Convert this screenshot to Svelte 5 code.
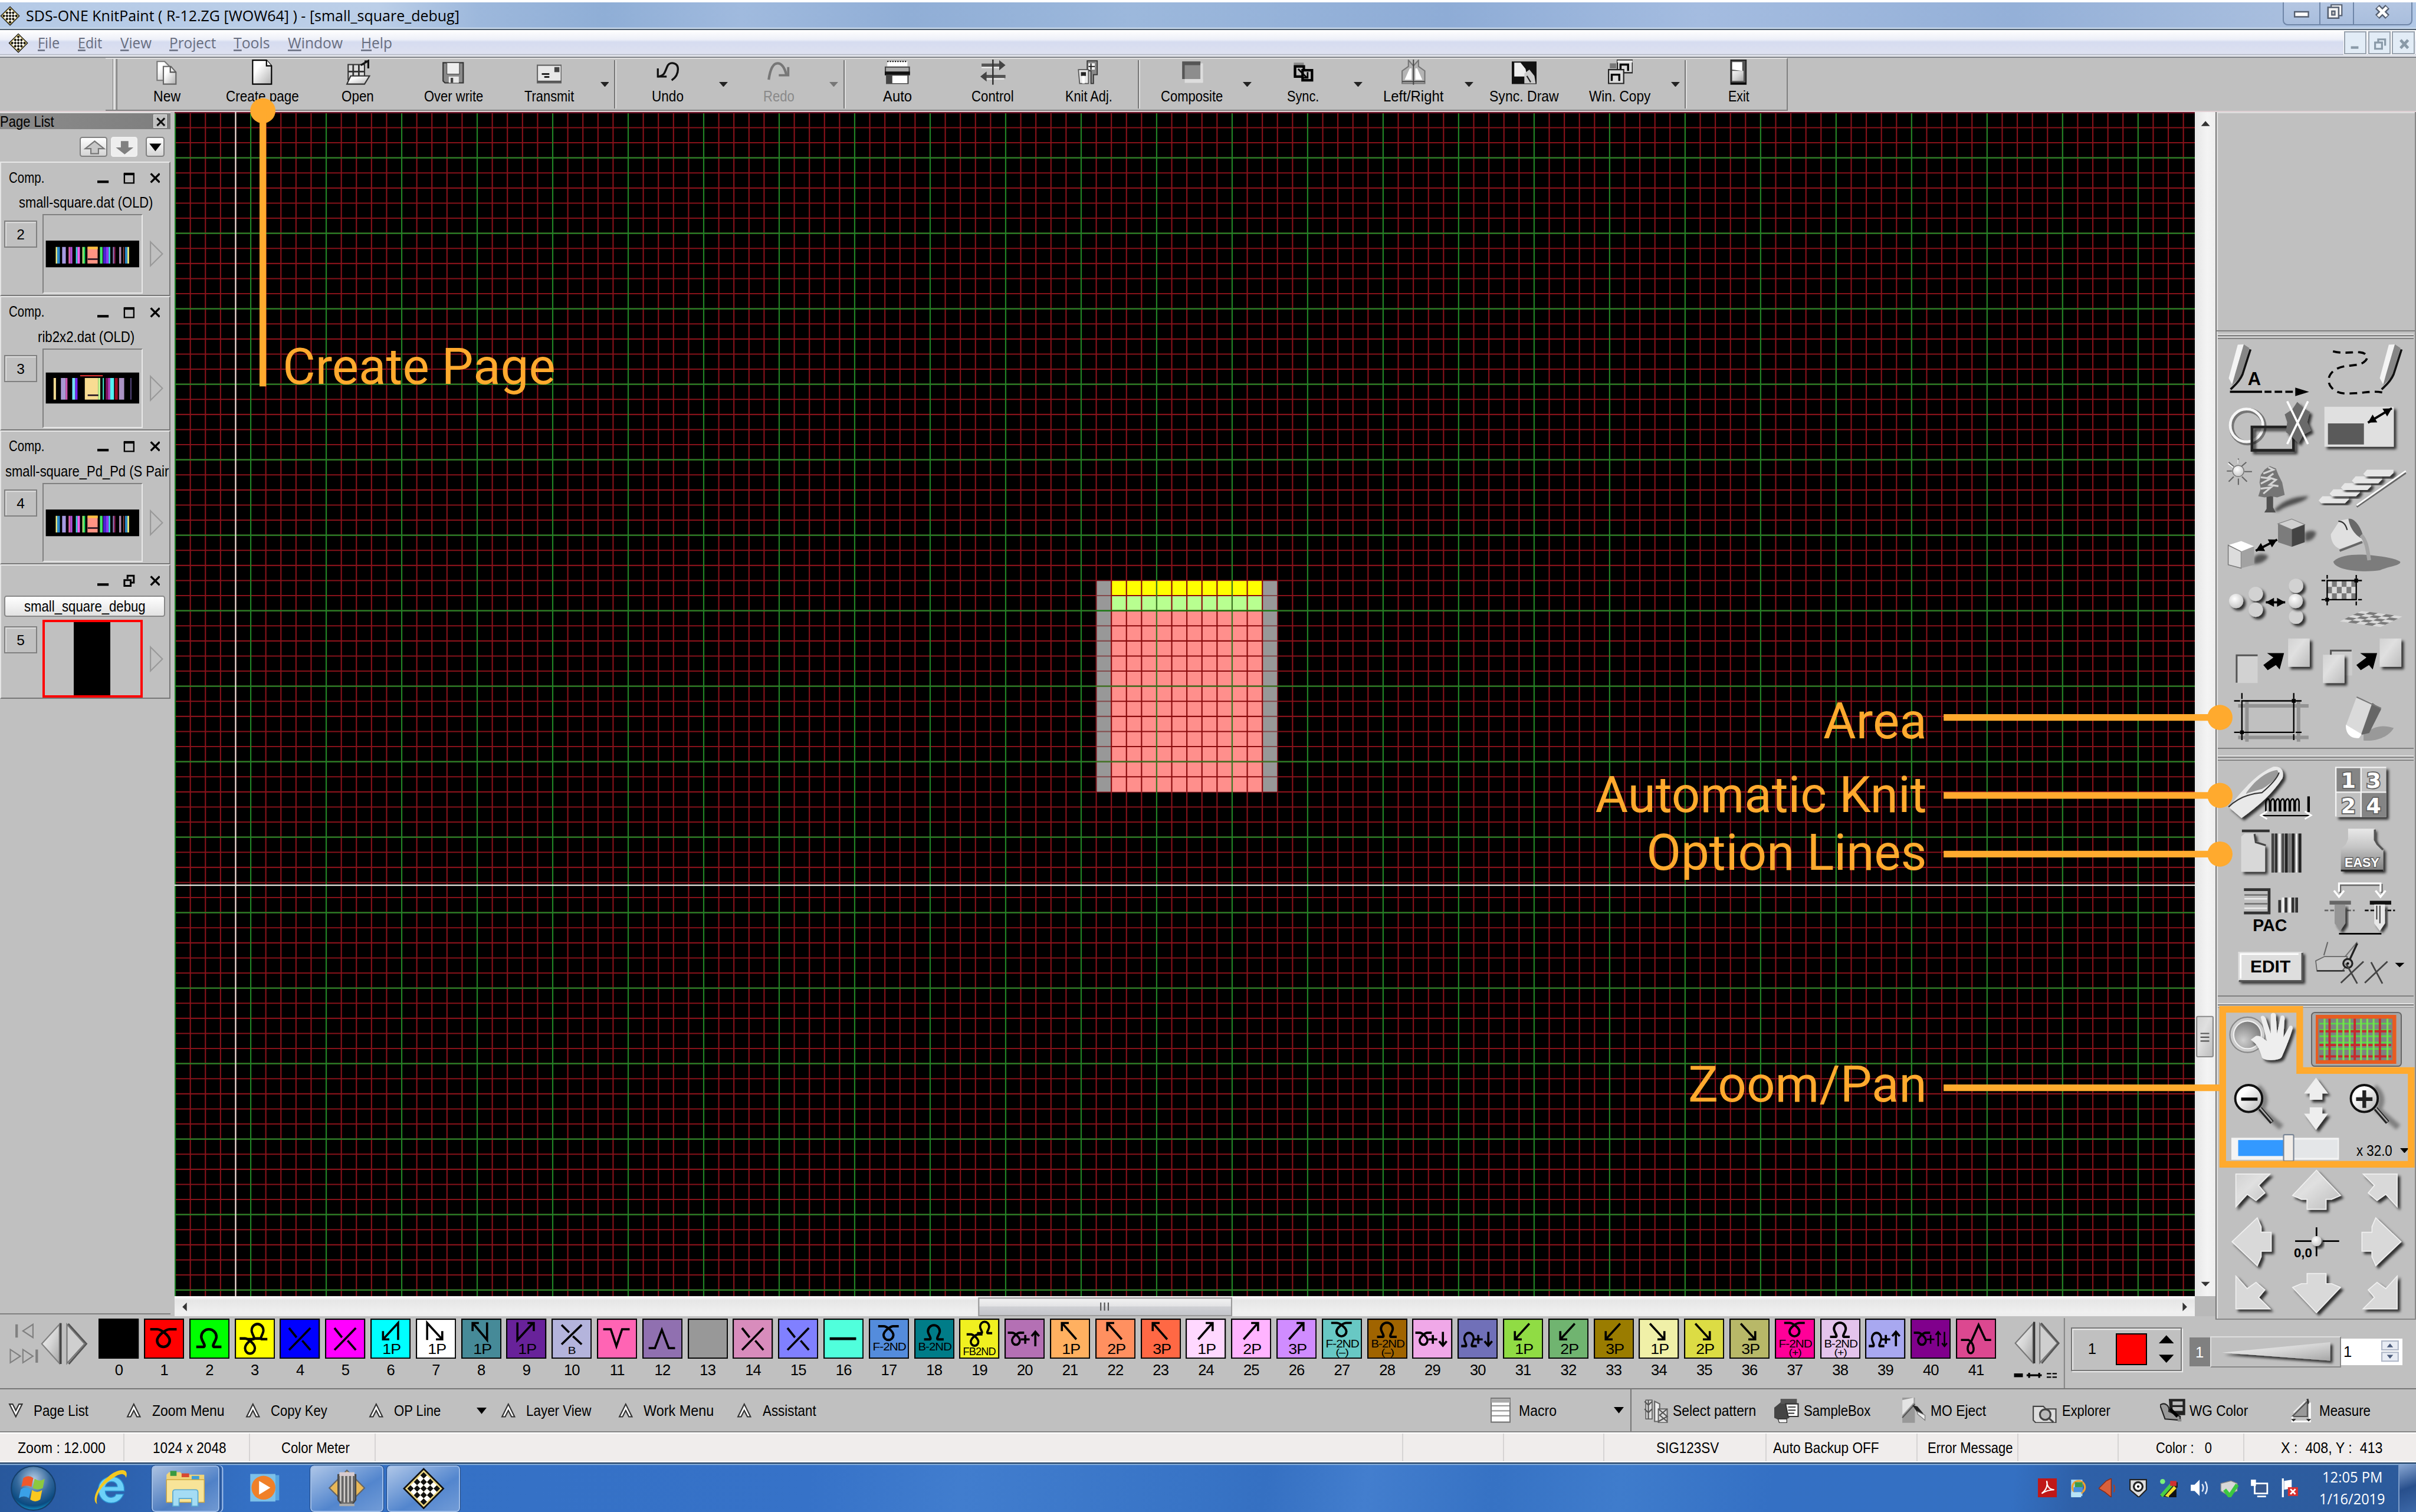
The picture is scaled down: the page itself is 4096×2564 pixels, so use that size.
<script>
  // ---------- drawing helpers ----------
  const range = (a, b, s) => {
    const r = [];
    for (let v = a; v <= b; v += s) r.push(v);
    return r;
  };
  const LEFT = 138.6, RIGHT = 1744.4, TOP = 89, BOTTOM = 1030.3;
  const vPath = (xs) => xs.map((x) => `M${x} ${TOP}V${BOTTOM}`).join('');
  const hPath = (ys) => ys.map((y) => `M${LEFT} ${y}H${RIGHT}`).join('');
  const redV = vPath(range(151.1, RIGHT, 12));
  const redH = hPath(range(101.4, BOTTOM, 12));
  const greenV = vPath(range(139.1, RIGHT, 60));
  const greenH = hPath(range(125.4, BOTTOM, 60));
  const kRedV = range(883.1, 1010, 12).map((x) => `M${x} 461.4V629.4`).join('');
  const kRedH = range(473.4, 625, 12).map((y) => `M883.1 ${y}H1003.1`).join('');
  const kGrayH = range(473.4, 625, 12).map((y) => `M871.1 ${y}H883.1M1003.1 ${y}H1015.1`).join('');

  // ---------- top toolbar ----------
  const page = 'fill="url(#paper)" stroke-width="1"';
  const toolbar = [
    { n: 'New', w: 21.6, i: `<path d="M2.500 1.500h6l4 4v11h-10z" ${page} stroke="#777"/><path d="M7.500 5.500h6l4 4.500v9.500h-10z" ${page} stroke="#666"/><path d="M13 5.500v4.500h4.500" fill="none" stroke="#555"/>` },
    { n: 'Create page', w: 58, i: `<path d="M2.500 .5h11l4 4.500v14.500h-15z" ${page} stroke="#000"/><path d="M13.500 .5v4.500h4" fill="#fff" stroke="#000"/>` },
    { n: 'Open', w: 25.7, i: `<path d="M2 4h13v12H2z" fill="#ddd" stroke="#333"/><path d="M6 4v12M10.500 4v12M2 9.500h13" stroke="#333" stroke-width="1.300"/><path d="M1 19.500l3-6.500h15l-4 6.500z" ${page} stroke="#333"/><path d="M12 4.500l6-3.500v6M15 1.500h3.500" fill="none" stroke="#111" stroke-width="1.500"/>` },
    { n: 'Over write', w: 47, i: `<path d="M1.500 2.500h16v16H3l-1.500-1.500z" fill="#8a8a8a" stroke="#333"/><path d="M4.500 2.500h10v9h-10z" fill="#eee" stroke="#555" stroke-width=".6"/><path d="M6 13.500h8v5H6z" fill="#e8e8e8"/><path d="M7.500 14.500h2v4h-2z" fill="#444"/>` },
    { n: 'Transmit', w: 39.5, drop: 1, i: `<path d="M.5 4.500h19v14H.5z" fill="#e8e8e8" stroke="#666"/><path d="M.5 17.500h19" stroke="#555" stroke-width="1.500"/><path d="M14 6h4v4h-4z" fill="#444"/><path d="M4 11.500h6M6 13.800h4" stroke="#000" stroke-width="1.200"/>` },
    { sep: 1 },
    { n: 'Undo', w: 25.3, drop: 1, i: `<path d="M2 13.500c6-1 5-3 8-9 2-3 8-2 8 3 0 4-2 7-5 9" fill="none" stroke="#111" stroke-width="1.600"/><path d="M2 7v6.500h7" fill="none" stroke="#111" stroke-width="1.500"/>` },
    { n: 'Redo', w: 24.8, off: 1, drop: 2, i: `<path d="M2 16C3 9 5 3 9 3s6 5 7 9" fill="none" stroke="#777" stroke-width="2"/><path d="M10 12.500h7.500V6" fill="none" stroke="#777" stroke-width="1.800"/>` },
    { sep: 1 },
    { n: 'Auto', w: 23, i: `<path d="M2 1.500h16v4H2z" fill="#fff"/><path d="M2 1.500h16" stroke="#000" stroke-dasharray="1 1"/><path d="M.5 6h19v5H.5z" fill="#aaa" stroke="#444"/><path d="M0 9.500h20v3H0z" fill="#111"/><path d="M1 12h18v7.500H1z" fill="#444"/><path d="M6 12.800h12v6H6z" fill="#fff"/>` },
    { n: 'Control', w: 33.6, i: `<path d="M1 4.500h15M4 13.500h16" stroke="#555" stroke-width="2.600"/><path d="M15 .5l5 4-5 4zM5 9.500l-5 4 5 4z" fill="#444"/><path d="M1 6.300h14M5 15.300h14" stroke="#eee"/><path d="M10 0v20" stroke="#333" stroke-width="1.200"/>` },
    { n: 'Knit Adj.', w: 37.4, i: `<path d="M9 1h8v11h-3v7h-2V9H9z" fill="#888" stroke="#333" stroke-width=".8"/><path d="M10 3h5v5h-5z" fill="#fff"/><path d="M12 3v5M10 5.500h5" stroke="#222"/><path d="M2 8h8v11H3z" fill="#e8e8e8" stroke="#555" stroke-width=".8"/><path d="M4 10h4v3H4z" fill="#222"/><path d="M6 13v6" stroke="#fff" stroke-width="2"/>` },
    { sep: 1 },
    { n: 'Composite', w: 49.4, drop: 1, i: `<path d="M2 1.500h14.500v14H2z" fill="#8d8d8d"/><path d="M2 1.500h14.500v3H4v11H2z" fill="#555"/><path d="M4 15.500h14.500v3H4z" fill="#ddd"/><path d="M16.500 3h2v15h-2z" fill="#ddd"/>` },
    { n: 'Sync.', w: 25.5, drop: 1, i: `<path d="M3 2.500h8v3H5v8H3z" fill="#888"/><path d="M4 5.500h7v8H4z" fill="none" stroke="#000" stroke-width="2"/><path d="M10 8.500h7.500v8H10z" fill="#c0c0c0" stroke="#000" stroke-width="2"/><path d="M6.500 7.500l7 7M14 10v4.500H9.500" stroke="#000" fill="none" stroke-width="1.300"/>` },
    { n: 'Left/Right', w: 48, drop: 1, i: `<path d="M6 .5L10 5l4-4.500v5l5 3.500v10H1V9l5-3.500z" fill="#b4b4b4" stroke="#777"/><path d="M3 16l4-9h1.500v9zM17 16l-4-9h-1.500v9z" fill="#fff"/><path d="M10 0v20M1 17.500h18" stroke="#444" stroke-width=".9"/>` },
    { n: 'Sync. Draw', w: 55.2, i: `<path d="M0 1.500h20v18H0z" fill="#111"/><path d="M2 2.500h5l4 5 1 6H2z" fill="#eee"/><path d="M10 11l4-3 4 5 1 6h-9z" fill="#ccc"/><path d="M12 13l3 5" stroke="#222"/>` },
    { n: 'Win. Copy', w: 48.9, drop: 1, i: `<path d="M8 .5h12v10H8z" fill="#ddd" stroke="#222"/><path d="M8 1.500h12" stroke="#eee" stroke-width="1.600"/><path d="M10.500 9V4h6v5" fill="none" stroke="#000" stroke-width="1.600"/><path d="M1 8h12v11H1z" fill="#ddd" stroke="#222"/><path d="M3.500 17v-5h6v5" fill="none" stroke="#000" stroke-width="1.600"/><path d="M2 3h5v4H2z" fill="#777"/>` },
    { sep: 1 },
    { n: 'Exit', w: 16.8, i: `<path d="M4 .5h12v19H4z" fill="#555" stroke="#222"/><path d="M5 2h8v7l-8-1z" fill="#fff"/><path d="M5 9h9v8H5z" fill="url(#knob)"/><path d="M4 19h12" stroke="#000" stroke-width="1.500"/>` }
  ];

  const menus = [['File', 17.4, 14.7], ['Edit', 19.3, 14.3], ['View', 24.8, 14.2], ['Project', 37.2, 13.8], ['Tools', 28.9, 14.3], ['Window', 43.6, 14.3], ['Help', 24.8, 0]];

  // ---------- page list ----------
  const narrow = { y: 20.2, h: 21.2, sy: 5, sh: 13.2, bars: [[7.9,1.2,'#f0ee80'],[9,2.2,'#2a88c8'],[13,2.9,'#a79ae2'],[18.100,1.500,'#d460b0'],[19.6,1.500,'#b050d8'],[23.900,1.300,'#40cfe0'],[25.200,1.900,'#f262f2'],[29,1.200,'#a8dc70'],[30.200,1.100,'#20e060'],[33.100,8.100,'#ff9484'],[43,2.100,'#42e468'],[45.600,2.400,'#4c22d0'],[48,2.100,'#8a38f4'],[50,1.200,'#40e0e0'],[53.300,.9,'#9282c4'],[54.300,.9,'#a22462'],[58.300,1.600,'#aa84b2'],[61.700,.5,'#d06060'],[63,1.900,'#2a88c8'],[64.900,1.300,'#f0ee80']] };
  const wide = { y: 18.200, h: 24.600, sy: 4.300, sh: 17.200, bars: [[6.200,1.900,'#f0d890'],[12,3.800,'#a898d2'],[15.800,1.400,'#d454b2'],[21,2.400,'#74e0f8'],[23.400,1.800,'#7422f2'],[31,10.600,'#f8dc92'],[41.600,1.700,'#c2fb92'],[45.200,1,'#40e0c4'],[47.600,1.900,'#801262'],[49.500,1.700,'#b442c4'],[51.200,3,'#54f0f2'],[54.900,2.300,'#9c0a22'],[58.200,4.100,'#aa92c4'],[67.200,.9,'#584a82']] };
  const pages = [
    { id: 2, name: 'small-square.dat (OLD)', w: 106.6, x: 15.2, art: narrow },
    { id: 3, name: 'rib2x2.dat (OLD)', w: 77, x: 30, art: wide },
    { id: 4, name: 'small-square_Pd_Pd (S Pair', w: 130, x: 4.2, art: narrow }
  ];

  // ---------- colour palette ----------
  const down = 'M5 8.500h5.500c3 0 10 5 10 9a5 5 0 0 1-10 0c0-4 7-9 10-9h5.500';
  const up = 'M5.500 22.500h6c2-1-2-5-2-8a6 6 0 0 1 12 0c0 3-4 7-2 8h6';
  const s = (d, t = '', w = 1.700) => `<path d="${d}" fill="none" stroke="#000" stroke-width="${w}" ${t}/>`;
  const cap = (x, y, w, txt, f = 11.500) => `<text x="${x}" y="${y}" font-size="${f}" textLength="${w}" lengthAdjust="spacingAndGlyphs">${txt}</text>`;
  const cross = s('M7.500 7.500L13.500 15M18 17.500L24.500 25M24.500 7.500L7.500 25');
  const smallDown = s(down, 'transform="translate(3.500 -.5) scale(.78 .78)"', 2.400);
  const smallUp = s(up, 'transform="translate(3.500 -1.500) scale(.78 .8)"', 2.400);
  const midDown = s(down, 'transform="translate(-.5 5.500) scale(.62 .68)"', 2.700);
  const midUp = s(up, 'transform="translate(-.5 5) scale(.62 .75)"', 2.600);
  const plus = s('M13 16.500h7M16.500 13v7');
  const arU = s('M24.500 22V11M21.500 14l3-3.500 3 3.500');
  const arD = s('M24.500 10.500V21M21.500 18l3 3.500 3-3.500');
  const ul = s('M21 16.500L10 4M9.500 10V3.500H15');
  const ur = s('M10 16.500L21 4M16 3.500h5.500V10');
  const dl = s('M21 4L10 16M9.500 10v6.500H15');
  const dr = s('M9 4L20 16M20.500 10v6.500H15');
  const p = (n) => cap(9.500, 28, 14.500, n + 'P');
  const nd = (a, z, y = 25.500) => cap(3, y, 26.500, a + '-2ND', 9) + (z ? cap(11, 29.500, 10, z, 7.500) : '');
  const nds = (a, z) => nd(a, z, 22.800);
  const swatches = [
    ['#000', ''], ['#f00', s(down, '', 2.100)], ['#0f0', s(up, '', 2.100)],
    ['#ff0', s(down, 'transform="translate(0 8.500) scale(.78 .86)"', 2.400) + s(up, 'transform="translate(6 -3) scale(.78 .86)"', 2.400)],
    ['#00f', cross], ['#f0f', cross],
    ['#0ff', s('M22 17V3.500L10.500 16M10 10v6.500h5') + p(1)], ['#fff', s('M9 17V3.500L20.500 16M21 10v6.500h-5') + p(1)],
    ['#468a98', s('M20.500 3v14L9.500 4M9 10V3.500h5') + p(1)], ['#68229a', s('M9 3v14L21 4M22 10V3.500h-5') + p(1)],
    ['#b4b4dc', s('M8 5L14 11M17 14l7 6.500M24 5L8 20.500') + cap(13, 28, 6, 'B', 8)],
    ['#ff64b4', s('M5 8.500h6L15.500 22 20 8.500h6')], ['#9070b0', s('M5 23.500h5L15.500 9 21 23.500h5')],
    ['#989898', ''], ['#d88cbc', cross], ['#8080ff', cross], ['#50ffdc', s('M5 16H26', '', 2.200)],
    ['#548cdc', smallDown + nd('F')], ['#007c88', smallUp + nd('B')],
    ['#f0f020', s(down, 'transform="translate(3 7) scale(.6 .65)"', 2.800) + s(up, 'transform="translate(11 -3) scale(.6 .65)"', 2.800) + cap(3, 29, 26, 'FB2ND', 9)],
    ['#b470b4', midDown + plus + arU],
    ['#ffb060', ul + p(1)], ['#ff9060', ul + p(2)], ['#ff6844', ul + p(3)],
    ['#ffd8ff', ur + p(1)], ['#ffb4ff', ur + p(2)], ['#d08cff', ur + p(3)],
    ['#68c8c4', s(down, 'transform="translate(3.500 -3) scale(.78 .76)"', 2.400) + nds('F', '(–)')], ['#a06400', s(up, 'transform="translate(3.500 -3.500) scale(.78 .8)"', 2.400) + nds('B', '(–)')],
    ['#f0a8e8', midDown + plus + arD], ['#7070b8', midUp + plus + arD],
    ['#90dc44', dl + p(1)], ['#70b470', dl + p(2)], ['#9a7c00', dl + p(3)],
    ['#f0f0a8', dr + p(1)], ['#dcdc44', dr + p(2)], ['#b8b868', dr + p(3)],
    ['#ff0098', s(down, 'transform="translate(3.500 -3) scale(.78 .76)"', 2.400) + nds('F', '(+)')], ['#e4c4ec', s(up, 'transform="translate(3.500 -3.500) scale(.78 .8)"', 2.400) + nds('B', '(+)')],
    ['#a8a8f0', midUp + plus + arU], ['#80008c', midDown + s('M13 16.500h6M16 13v7M22 22V10.500M20 13l2-2.500 2 2.500M27 10.500V22M25 19.500l2 2.500 2-2.500', '', 1.200)],
    ['#dc4890', s('M4 17h6c5 3 5 10 2 10.500s-4-6 0-9L18 5l5.500 12H28')]
  ];

  // ---------- right tool box ----------
  const pen = '<path d="M10.700 4.500l4.800-.3L9 27l-2.500 9.500-3-5.500z" fill="#f4f4f4"/><path d="M15.500 4.200l4.500 3L13 30l-7 7 2.500-9z" fill="#868686"/><path d="M20.800 8.200L14.500 28C12 34 8 37 5 40" fill="none" stroke="#111" stroke-width="1.700"/>';
  const arrowTip = (x, y, r) => `<path transform="translate(${x} ${y}) rotate(${r})" d="M0 0l-6.500-3.600v7.200z" fill="#000"/>`;
  const two = (x1, y1, x2, y2) => {
    const a = (Math.atan2(y2 - y1, x2 - x1) * 180) / Math.PI;
    return `<path d="M${x1} ${y1}L${x2} ${y2}" stroke="#000" stroke-width="1.800"/>${arrowTip(x2, y2, a)}${arrowTip(x1, y1, a + 180)}`;
  };
  const sh = 'filter="url(#sh)"';
  const ball = (x, y, f = 'url(#ball)') => `<circle cx="${x}" cy="${y}" r="5.700" fill="${f}" ${sh}/>`;
  const card = (x, y) => `<path d="M${x} ${y}h17.200v22.500h-17.200z" fill="url(#soft-knob)" ${sh}/>`;
  const fatArrow = (x) => `<path d="M${x} 29l8-6-5-3.500h13.500l-3.500 13-3-3.500-6.500 4z" fill="#000"/>`;
  const frame = (x1, y1, x2, y2, e) => `<path d="M${x1 - e} ${y1}h${e - 1.5}M${x2 + 1.5} ${y1}h${e - 1.5}M${x1 - e} ${y2}h${e - 1.5}M${x2 + 1.5} ${y2}h${e - 1.5}M${x1} ${y1 - e}v${e - 1.5}M${x1} ${y2 + 1.5}v${e - 1.5}M${x2} ${y1 - e}v${e - 1.5}M${x2} ${y2 + 1.5}v${e - 1.5}" stroke="#000" stroke-width="1.100" fill="none"/><path d="M${x1} ${y1}H${x2}V${y2}H${x1}z" fill="none" stroke="#000" stroke-width="1.100"/><path d="M${x1 - 1.500} ${y2 - 1.500}h3v3h-3zM${x2 - 1.500} ${y1 - 1.500}h3v3h-3z"/>`;
  const steps = [[2.300, 33], [11, 27.600], [20, 22.600], [28.700, 17.200], [37.800, 11.900]].map(([x, y]) => `<path d="M${x} ${y + 3.500}l3-3.500h21v2.500l-3 3h-19z" fill="#e6e6e6" ${sh}/>`).join('');
  const checks = (x0, y0, w, h, c, r) => {
    let o = '';
    for (let i = 0; i < c; i++) for (let j = 0; j < r; j++) o += `<path d="M${x0 + i * w} ${y0 + j * h}h${w}v${h}h-${w}z" fill="${(i + j) % 2 ? '#7a7a7a' : '#dadada'}"/>`;
    return o;
  };
  const topTools = [
    pen + '<text x="18.600" y="36.500" font-size="15" font-weight="bold" textLength="10.500" lengthAdjust="spacingAndGlyphs">A</text><path d="M4.500 41.900H30M32 41.900h5.500M40 41.900h6M48.500 41.900h6" stroke="#000" stroke-width="1.800"/><path d="M56.400 38.500l11 3.400-11 3.400z"/>',
    '<path d="M13.700 9.700C22 12 29 10 35 10.500S43 15 38 18.500 24 20 17 23.500 8 34 13 39 24 43.500 32 43s14-2 21-.5" fill="none" stroke="#000" stroke-width="1.700" stroke-dasharray="6 4"/><g transform="translate(47.400 0)">' + pen + '</g>',
    `<circle cx="18.700" cy="23.700" r="13" fill="none" stroke="#555" stroke-width="3.800" opacity=".7"/><circle cx="17.700" cy="22.700" r="13" fill="none" stroke="#f6f6f6" stroke-width="2.200"/><path d="M22 24h33v18.500H22z" fill="none" stroke="#222" stroke-width="2.200" ${sh}/><path d="M58 4l5 5 5 3-2 8 3 7-6 3-4 7-6-6-4-3 1-8-2-6 6-4z" fill="#6a6a6a" ${sh}/><path d="M50 3.500l16.500 34M66.500 3.500L50 37.500" stroke="#fff" stroke-width="1.700"/>`,
    `<path d="M6.900 7.900H62v31.700H6.900z" fill="#e0e0e0" ${sh}/><path d="M9.700 21.100h28.600v16.800H9.700z" fill="#5a5a5a"/>` + two(41.500, 20.500, 60.500, 9.100),
    `<path d="M3.500 6l4 3.500M17.500 6l-4 3.500M3.500 21.500l4-4M18 21.500l-4-4M11.200 3v4M11.200 19v5M2 13h4M16 13.500h6" stroke="#666"/><path d="M11 4v3M3 7l4 3" stroke="#fff" stroke-width=".8"/><circle cx="11.100" cy="13" r="4.500" fill="url(#ball)" stroke="#777" stroke-width=".7"/><path d="M39 45c6-8 16-12 28-12-4 6-16 6-24 12z" fill="#333" opacity=".8" filter="url(#soft)"/><path d="M33.600 31h5.200v11l2 4h-9l1.800-3z" fill="#505050"/><path d="M36 9l5 2 2 5 3 6 1 5 1 5-6 2-5-1-5 1-5-1 2-6-1-5 1-6 3-4z" fill="#757575"/><path d="M35 10l4 2-8 3M29 18l8 1-8 4M29 27l8-1-6 5M39 15l-4 3 6 2-5 4 7 1" stroke="#d4d4d4" stroke-width="1.500" fill="none"/>`,
    steps + '<path d="M32.600 41.500l39-27" stroke="#666" stroke-width="1.500"/><path d="M32.600 40.300l39-27.300" stroke="#fff" stroke-width="1.300"/>',
    '<path d="M24 35c4-3 9-2 11 0-3 5-8 6-12 6zM64 16c4-2 7-2 9 0-1 5-5 7-9 7z" fill="#555" filter="url(#soft)"/><path d="M3.100 26l10.300-3.300 10.300 4.200-10.300 4.200z" fill="#fff"/><path d="M3.100 26l10.300 5.100v13.200L3.100 41.600z" fill="#dcdcdc" stroke="#777" stroke-width=".7"/><path d="M13.400 31.100l10.300-4.200v14.700l-10.300 2.700z" fill="#a2a2a2"/><path d="M42.700 9l10.900-3.800 10.300 4.400-10.300 4z" fill="#d0d0d0" stroke="#888" stroke-width=".6"/><path d="M42.700 9l10.900 4.600v13.700l-10.900-3.600z" fill="#7c7c7c"/><path d="M53.600 13.600l10.300-4v14.100l-10.300 3.600z" fill="#444"/>' + two(25, 30.500, 42, 21.600),
    '<path d="M14 39c6-6 20-6 30-5 8 1 18 2 23 5 2 3-10 4-16 7-14 2-36 0-37-7z" fill="#7c7c7c"/><path d="M12 17.400l7-11 8-1.500L38 22.700 19 29c-5-2-7-7-7-11.600z" fill="#e0e0e0"/><path d="M19 30.500l18-7" stroke="#666" stroke-width="1.800"/><path d="M18 7c4 0 6 3 7 7" fill="none" stroke="#333"/><path d="M26 5c5-1 11 8 12 16-5-1-11-8-12-16z" fill="#686868"/><path d="M36 18c4 4 5 10 6.500 20" fill="none" stroke="#a4a4a4" stroke-width="3"/>',
    ball(25, 18.800, '#d2d2d2') + ball(9.400, 24.400) + ball(25, 31.400, '#d2d2d2') + two(33, 25.500, 48.400, 25.500) + ball(57, 12.400, '#d2d2d2') + ball(57, 37, '#d2d2d2') + ball(56.700, 24.400),
    checks(9.100, 8.200, 3.850, 5.070, 6, 3) + frame(9.100, 8.200, 32.200, 23.400, 4.500) + `<g transform="translate(44 38.700) scale(1.050 .27) rotate(28) translate(-17.500 -17.500)">${checks(0, 0, 7, 7, 5, 5)}</g>`,
    '<path d="M9.300 20.700h17.200v22.500H9.300z" fill="#d2d2d2"/><path d="M9.800 43V21.200h16.700" fill="none" stroke="#555" stroke-width="1.400"/>' + fatArrow(31) + card(50.700, 7.900),
    '<path d="M12 17.300h17v20H12z" fill="#ccc"/><path d="M12 24v-6.500h16.500" fill="none" stroke="#555" stroke-width="1.400"/>' + card(5.700, 20.700) + fatArrow(32.300) + card(50.800, 7.900),
    '<path d="M18 11v33M59 11v33M11 15.500h56M11 40.500h56" stroke="#888" stroke-width="2.800" opacity=".8"/>' + frame(14, 11.500, 55.200, 36.500, 6.200),
    '<path d="M38 38c8-6 14-8 24-5-4 7-14 11-24 10z" fill="#999"/><path d="M32.500 8.400L45 13 36 38l-12-7z" fill="#dadada"/><path d="M45 13l7 5.200L42.500 37 36 38.500z" fill="#666"/><path d="M32.500 8.400L52 17.500" stroke="#777"/><path d="M24 30.500l12.500 7.500-2 3c-6 1-11-3-10.500-10.500z" fill="#fff"/>'
  ];
  const teeth = (x) => `<path d="M${x - 8} 18.600h17" stroke-width="3"/><path d="M${x - 12} 24.800h24" stroke-width="1.300" stroke-dasharray="3 1.500"/>`;
  const coil = range(33, 60, 3.900).map((x) => `M${x} 38v-8q2-4 3 0v8`).join('');
  const knitTools = [
    `<path d="M3.400 34.400C12 25 22 10 38.800 2.500c6-1 9 3 7.500 9C38 24 28 33 13.700 43.300z" fill="#e9e9e9" ${sh}/><path d="M17 24C24 13 34 6 42 5c3 3-3 10-12 15z" fill="#9a9a9a"/><path d="M3.400 34.400C10 28 18 24 30 23c7-6 12-11 13.500-16" fill="none" stroke="#333" stroke-width="1"/><path d="${coil}" fill="none" stroke="#000" stroke-width="1.200"/><path d="M67 26v12.500" stroke="#000" stroke-width="2"/><path d="M30 41.300h38" stroke="#000"/><path d="M34 38l-5 3 5 3M64 38l5 3-5 3" fill="none" stroke="#fff" stroke-width="1.300"/>`,
    `<path d="M16 2.700h40v39.700H16z" fill="#c0c0c0" ${sh}/><path d="M16 2.700h20v20H16zM36 22.700h20v19.700H36z" fill="#858585"/><path d="M36 2.700v39.700M16 22.700h40M16 42V3h40" stroke="#f4f4f4" fill="none" stroke-width="1.100"/><g fill="#fff" stroke="#666" stroke-width="1.800" paint-order="stroke" font-size="17" font-weight="bold" font-family="DejaVu Sans" text-anchor="middle"><text x="26" y="19">1</text><text x="46" y="19">3</text><text x="26" y="39.500">2</text><text x="46" y="39.500">4</text></g>`,
    `<path d="M14 7.500h22" stroke="#333" stroke-width="2.200"/><path d="M13.400 12l3-2.500h7.500l1 6 7.500 3.500v21H13.400z" fill="#d8d8d8" ${sh}/><path d="M24 10l1 6.500 8 2.500" fill="none" stroke="#444" stroke-width="1.500"/><path d="M37.500 9.600h24v31h-24z" fill="#888"/>` + ['#444', '#222', '#eee', '#444', '#222', '#777', '#222', '#eee', '#222'].map((c, i) => `<path d="M${38.500 + i * 2.700} 9.600v31" stroke="${c}" stroke-width="${i % 2 ? 1.500 : 2.100}"/>`).join(''),
    `<path d="M25.700 5.800h21.100v8l2 4 4.900 4.500v16.700H20V22l4-4 1.700-4z" fill="url(#shirt)" ${sh}/><path d="M20 39h33.500" stroke="#222" stroke-width="1.400"/><path d="M47 6.500v8l2 3.500 4.500 4.500" fill="none" stroke="#555" stroke-width="1.600"/><text x="23" y="36" font-size="10.500" font-weight="bold" fill="#fff" stroke="#666" stroke-width="1.400" paint-order="stroke" textLength="27.500" lengthAdjust="spacingAndGlyphs">EASY</text>`,
    `<path d="M15.600 8.300h20v18.500h-20" fill="none" stroke="#333" stroke-width="2.200"/><path d="M16 12.500h18.500M16 19.500h18.500" stroke="#666"/><path d="M16 15.500h18M16 23h18" stroke="#eee"/><path d="M44 26.500v-10M49 26.500v-12M54.500 26.500v-12M57.500 26.500v-12" stroke="#333" stroke-width="2.200"/><path d="M46.700 26.500v-12M52 26.500v-12" stroke="#eee" stroke-width="2"/><text x="22.600" y="41.200" font-size="13.600" font-weight="bold" textLength="27.300" lengthAdjust="spacingAndGlyphs">PAC</text>`,
    `<path d="M19.500 11V4.500H52.500V11" fill="none" stroke="#666" stroke-width="1.500"/><path d="M18.500 10V3.300H51.500V10" fill="none" stroke="#fff" stroke-width="1.500"/><path d="M14.500 9l4 5 4-5M47.500 9l4 5 4-5" fill="none" stroke="#fff" stroke-width="1.600"/><g stroke="#666">${teeth(19)}</g><g stroke="#111">${teeth(51)}</g><path d="M15 20h8.500v15l-4 6-4.500-6z" fill="#959595" ${sh}/><path d="M46.500 20H55v15l-4 6-4.500-6z" fill="#e8e8e8" ${sh}/><path d="M51 21v14M48.500 21v11" stroke="#444"/><path d="M18.500 43.300h33.700" stroke="#000" stroke-width="1.200"/>`,
    `<path d="M11 11.700h51.200v23.500H11z" fill="#dedede" ${sh}/><path d="M62 12.500v22.500H11.500" fill="none" stroke="#555" stroke-width="1.600"/><path d="M13 33V13.500h46" fill="none" stroke="#fff" stroke-width="1.300"/><text x="20.600" y="28.300" font-size="13.800" font-weight="bold" textLength="32" lengthAdjust="spacingAndGlyphs">EDIT</text>`,
    `<path d="M0 19l7-3h16l10-12" stroke="#777" fill="none"/><path d="M9.500 4L6.500 14.500" stroke="#666"/><path d="M0 19l7-3.500h18l-2 9-2 2.500H1z" fill="#c8c8c8" stroke="#666" stroke-width=".8"/><path d="M1 26.800h22" stroke="#333" stroke-width="1.200"/><circle cx="25.500" cy="21" r="3.600" fill="#bbb" stroke="#222" stroke-width="1.500"/><circle cx="25.500" cy="21" r="1"/><path d="M27 18l6-13" stroke="#222" stroke-width="1.600"/><path d="M20 36.500l18-17M24 21l9 16M39 36.500l18-17M44 20l9 17" stroke="#444" stroke-width="1.300"/><path d="M63 20.500h7.500l-3.800 3.500z"/>`
  ];
  const arrowUp = 'M20 1L39 21l-7 3h-4.500v8h-15v-8H8l-7-3z';
  const corner = 'M2 2h27l-9 9 5 6-7 6-7-5-9 10z';
  const pad = [
    [corner, 0, 0], [arrowUp, 0, 1], [corner, 90, 0],
    [arrowUp, -90, 1], ['', 0, 0], [arrowUp, 90, 1],
    [corner, -90, 0], [arrowUp, 180, 1], [corner, 180, 0]
  ];

  // ---------- bottom bars ----------
  const panels = [
    { up: 0, n: 'Page List', w: 43.6, x: 6.500 }, { up: 1, n: 'Zoom Menu', w: 57.5, x: 100.500 }, { up: 1, n: 'Copy Key', w: 44.9, x: 194.800 },
    { up: 1, n: 'OP Line', w: 37.2, x: 292.800 }, { up: 1, n: 'Layer View', w: 51.8, x: 397.800, drop: 1 }, { up: 1, n: 'Work Menu', w: 55.9, x: 491.300 }, { up: 1, n: 'Assistant', w: 42.5, x: 585.600 }
  ].map((q, i, a) => ({ ...q, span: i < a.length - 1 ? a[i + 1].x - q.x : 599.100 }));
  const utils = [
    { n: 'Select pattern', w: 66.2, slot: 104.200, i: '<path d="M2 2h5v15H2z" fill="#ddd" stroke="#555" stroke-width=".7"/><path d="M1 3l3 3 3-3M1 9l3 3 3-3M4 2v15" stroke="#555" fill="none"/><path d="M9 3l4 2v14h-4z" fill="#eee" stroke="#666"/><path d="M12 9h7v11h-7z" fill="#ddd" stroke="#666"/><path d="M12 9l7 6-7 4M19 9l-6 5 6 5" stroke="#555" fill="none"/>' },
    { n: 'SampleBox', w: 53.1, slot: 100.800, i: '<path d="M0 8l6-5 6 4v9l-6 3-6-3z" fill="#444"/><path d="M5 1h13v4H5z" fill="#555"/><path d="M9 5h10v10h-8z" fill="#fff" stroke="#333"/><path d="M11 7.500h6M11 10h6M11 12.500h5" stroke="#444"/><path d="M3 17h7v3H4z" fill="#eee" stroke="#333" stroke-width=".6"/>' },
    { n: 'MO Eject', w: 44.1, slot: 104.200, i: '<path d="M1 0h10v20H1z" fill="#999"/><path d="M1 2l9-2v4L1 14z" fill="#e4e4e4"/><path d="M1 16L11 5" stroke="#555"/><path d="M9 6l4 1 5 6-5-1z" fill="#222"/><path d="M13 11l6 3v4l-6-5z" fill="#eee" stroke="#777" stroke-width=".6"/>' },
    { n: 'Explorer', w: 38.300, slot: 101.500, i: '<path d="M1 7h8l2 2h8v11H3l-2-2z" fill="#ddd" stroke="#444"/><circle cx="10.500" cy="13.500" r="4.200" fill="#bbb" stroke="#444" stroke-width="1.500"/><path d="M13 16l4 3.500" stroke="#444" stroke-width="1.500"/>' },
    { n: 'WG Color', w: 46.500, slot: 103, i: '<path d="M7 1h13v13H8z" fill="#222"/><path d="M10 3h8v3h-8zM10 7.500h8v3h-8z" fill="#bbb"/><path d="M0 6c4-3 8 1 7 5l9 4v3L4 17z" fill="#999" stroke="#222"/><path d="M8 9l6 6" stroke="#000" stroke-width="2.500"/><path d="M14 18h3" stroke="#888" stroke-width="2"/>' },
    { n: 'Measure', w: 40.800, slot: 80, i: '<path d="M2 15L14 3v12z" fill="#999" stroke="#555"/><path d="M14 1l1 4" stroke="#333" stroke-width="1.500"/><path d="M3 12L12 3" stroke="#eee"/><path d="M2 15v4h14v-4M16 4v12" stroke="#fff" fill="none" stroke-width="1.500"/><path d="M1 17h4l-2 2zM17 17h-4l2 2z" fill="#222"/>' }
  ];
  const nb = '\u00a0';
  const status = [['Zoom : 12.000', 69.8, 98.8, 14], ['1024 x 2048', 58.400, 100, 22.500], ['Color Meter', 54.300, 100, 25], ['', 0, 816.400, 0], ['', 0, 80, 0], ['', 0, 80, 0], ['SIG123SV', 49.800, 128.800, 41.200], ['Auto Backup OFF', 84.200, 119.700, 4.900], ['Error Message', 67.800, 80.500, 8.200], ['', 0, 79.600, 0], [`Color :${nb}${nb} 0`, 44.500, 100, 29.400], [`X :${nb} 408, Y :${nb} 413`, 80.900, 136, 29]];

  // checkered diamond used as the application mark
  const mesh = range(0, 24, 1).map((k) => {
    const i = k % 5, j = Math.floor(k / 5);
    return `<rect x="${-6.5 + i * 2.6}" y="${-6.5 + j * 2.6}" width="2.600" height="2.600" fill="${k % 2 ? '#fff' : '#111'}"/>`;
  }).join('');
  const diamondIcon = `<g transform="translate(12 12) rotate(45)"><rect x="-7.800" y="-7.800" width="15.600" height="15.600" fill="#ecd680" stroke="#111" stroke-width=".9"/>${mesh}</g>`;
  const tray = [
    '<path d="M0 0h15v15H0z" fill="#c01818"/><path d="M3 12c4-3 5-7 4-10 0 5 3 7 6 7-4 0-7 1-10 3z" fill="none" stroke="#fff"/>',
    '<path d="M2 1h9v13H2z" fill="#a8d8f4"/><circle cx="8" cy="7" r="5" fill="none" stroke="#f0a030" stroke-width="1.500"/><path d="M5 3h6v4H5z" fill="#3a9a4a"/><path d="M4 7h7v4H4z" fill="#4a90e0"/><path d="M2 11h8v4H2z" fill="#b8e4f8"/>',
    '<path d="M0 8l6-6 4-2v15L5 11z" fill="#d8603c" stroke="#8a2c18" stroke-width=".7"/><path d="M12 5c1 2 1 4 0 6" stroke="#a84028" fill="none"/>',
    '<path d="M1 1h13v8l-6 6-7-6z" fill="#ddd" stroke="#222"/><circle cx="7.500" cy="6.500" r="3.500" fill="#fff" stroke="#222" stroke-width="1.500"/><circle cx="7.500" cy="6.500" r="1"/>',
    '<path d="M1 14L12 3h3v4L7 15z" fill="#222"/><path d="M1 13L9 4l2 2-8 9z" fill="#46d046"/><path d="M5 14l7-8 2 2-6 7z" fill="#f0e030"/><path d="M8 14l6-6v7H8z" fill="#111"/><circle cx="3" cy="2.500" r="2" fill="#7af07a"/><path d="M9 2h5v4H9z" fill="#d03030"/>',
    '<path d="M1 5h3l4-4v13l-4-4H1z" fill="#fff"/><path d="M10 4.500q2 3 0 6M12.500 2.500q3 5 0 10" stroke="#dfe8f8" fill="none" stroke-width="1.200"/>',
    '<path d="M1 4l8-2 5 2v6l-8 3-5-3z" fill="#d8d8d8" stroke="#888" stroke-width=".6"/><path d="M4 9l4 5 6-9" fill="none" stroke="#3cc840" stroke-width="3"/>',
    '<path d="M4 4h10v8H4z" fill="#38588c" stroke="#fff" stroke-width="1.300"/><path d="M1 1h4v5H1z" fill="#fff"/><path d="M6 14.500h7" stroke="#fff" stroke-width="1.500"/>',
    '<path d="M2 0v15" stroke="#fff" stroke-width="1.500"/><path d="M3 2l6-1v7l-6 1z" fill="#fff"/><path d="M6 7h8v7H6z" fill="#d83030"/><path d="M8 8.500l4 4M12 8.500l-4 4" stroke="#fff" stroke-width="1.300"/>'
  ];
  const notes = [['Area', 586.9, 570.3], ['Automatic Knit', 645.700, 632.300], ['Option Lines', 691.300, 678.900], ['Zoom/Pan', 875.700, 864.700]];
</script>

{#snippet t(str, w, cls = '')}
  <svg class="t {cls}" width={w} height="14" viewBox="0 0 {w} 14"><text x="0" y="11.300" textLength={w} lengthAdjust="spacingAndGlyphs">{str}</text></svg>
{/snippet}

<svg class="defs" width="0" height="0">
  <defs>
    <linearGradient id="paper" x1="0" y1="0" x2="1" y2="1"><stop offset=".3" stop-color="#fff" /><stop offset="1" stop-color="#b0b0b0" /></linearGradient>
    <linearGradient id="knob" x1="0" y1="0" x2="1" y2="1"><stop offset="0" stop-color="#f4f4f4" /><stop offset=".5" stop-color="#d6d6d6" /><stop offset="1" stop-color="#a6a6a6" /></linearGradient>
    <linearGradient id="soft-knob" x1="0" y1="0" x2="1" y2="1"><stop offset="0" stop-color="#d2d2d2" /><stop offset=".4" stop-color="#e0e0e0" /><stop offset="1" stop-color="#bcbcbc" /></linearGradient>
    <linearGradient id="shirt" x2="0" y2="1"><stop offset="0" stop-color="#e8e8e8" /><stop offset=".45" stop-color="#c4c4c4" /><stop offset="1" stop-color="#808080" /></linearGradient>
    <radialGradient id="ball" cx=".4" cy=".35" r=".7"><stop offset="0" stop-color="#fff" /><stop offset="1" stop-color="#c4c4c4" /></radialGradient>
    <radialGradient id="lens" cx=".35" cy=".7" r=".8"><stop offset="0" stop-color="#cfcfcf" /><stop offset="1" stop-color="#707070" /></radialGradient>
    <radialGradient id="orb" cx=".5" cy=".3" r=".75"><stop offset="0" stop-color="#b4cce4" /><stop offset=".5" stop-color="#34689c" /><stop offset=".8" stop-color="#0a4a80" /><stop offset="1" stop-color="#18b8e8" /></radialGradient>
    <filter id="sh" x="-20%" y="-20%" width="150%" height="150%"><feDropShadow dx="2" dy="2" stdDeviation="1.100" flood-color="#000" flood-opacity=".75" /></filter>
    <filter id="soft" x="-30%" y="-30%" width="160%" height="160%"><feGaussianBlur stdDeviation="1.200" /></filter>
  </defs>
</svg>

<div class="screen">
  <header class="title">
    <svg class="app-icon" width="16" height="16" viewBox="0 0 24 24">{@html diamondIcon}</svg>
    {@render t('SDS-ONE KnitPaint ( R-12.ZG [WOW64] ) - [small_square_debug]', 344.5, 'seg')}
    <div class="win-btns">
      <svg width="28" height="18"><path d="M8.500 7.500h11v4h-11z" fill="#fff" stroke="#555f70" stroke-width="1.100" /></svg>
      <svg width="27" height="18"><path d="M8.500 2h8.500v8.500H8.500z" fill="#fff" stroke="#555f70" /><path d="M6 4h8.500v8.500H6z" fill="#f4f4f4" stroke="#555f70" stroke-width="1.200" /><path d="M9 7h2.500v3H9z" fill="#bbb" stroke="#555f70" /></svg>
      <svg width="46" height="18"><path d="M18.500 3.500l8 8M26.500 3.500l-8 8" stroke="#555f70" stroke-width="4.600" /><path d="M19 4l7 7M26 4l-7 7" stroke="#fff" stroke-width="2.400" /></svg>
    </div>
  </header>

  <nav class="menu">
    <svg class="app-icon" width="16" height="16" viewBox="0 0 24 24">{@html diamondIcon}</svg>
    {#each menus as [name, w, gap]}
      <svg class="t seg item" width={w} height="14" viewBox="0 0 {w} 14"><text y="11.300" textLength={w} lengthAdjust="spacingAndGlyphs"><tspan class="key">{name[0]}</tspan>{name.slice(1)}</text></svg>
      <i class="gap" style:width="{gap}px"></i>
    {/each}
    <div class="child-btns">
      <svg width="18" height="18"><path d="M4.500 12h6" stroke="#8a9aa8" stroke-width="2" /></svg>
      <svg width="18" height="18"><path d="M4.500 8h5.500v5H4.500zM7 7.500V5.500h5.500v5" fill="none" stroke="#8a9aa8" stroke-width="1.500" /></svg>
      <svg width="18" height="18"><path d="M6 6l6 6.500M12 6l-6 6.500" stroke="#8a9aa8" stroke-width="2.200" /></svg>
    </div>
  </nav>

  <div class="toolbar">
    <div class="tools">
      {#each toolbar as b}
        {#if b.sep}
          <i class="sep"></i>
        {:else}
          <div class="tool" class:off={b.off}>
            <svg width="20" height="20" viewBox="0 0 20 20">{@html b.i}</svg>
            {@render t(b.n, b.w)}
          </div>
          {#if b.drop}<div class="drop" class:dim={b.drop === 2}><svg width="7" height="4"><path d="M0 0h7L3.500 4z" /></svg></div>{/if}
        {/if}
      {/each}
    </div>
  </div>

  <main class="body">
    <aside class="pages">
      <div class="pages-head">
        {@render t('Page List', 43)}
        <svg class="close" width="11" height="11"><path d="M2.500 2.500l6 6M8.500 2.500l-6 6" stroke="#111" stroke-width="1.400" /></svg>
      </div>
      <div class="pages-nav">
        <svg class="nb" width="22" height="16"><path d="M11 2.500l7.500 6H14v4H8v-4H3.500z" fill="#c8c8c8" stroke="#777" /></svg>
        <svg class="nb lite" width="21" height="16"><path d="M10 13l7-5.500h-4v-5H7v5H3z" fill="#808080" /></svg>
        <svg class="nb" width="15" height="16"><path d="M2 4.500h9.500L6.750 10.500z" /></svg>
      </div>
      {#each pages as pg}
        <section class="card">
          <div class="card-top">
            {@render t('Comp.', 28.3)}
            <svg width="50" height="12"><path d="M0 9.500h9" stroke="#000" stroke-width="2" /><path d="M21.500 3.500h7.500v7h-7.500z" fill="none" stroke="#000" stroke-width="1.100" /><path d="M21 3.300h8.500" stroke="#000" stroke-width="2" /><path d="M42.500 3l7 7M49.500 3l-7 7" stroke="#000" stroke-width="1.600" /></svg>
          </div>
          <div class="card-name" style:padding-left="{pg.x}px">{@render t(pg.name, pg.w)}</div>
          <div class="card-body">
            <div class="num">{pg.id}</div>
            <svg class="thumb" width="80" height="63">
              <path d="M1.700 {pg.art.y}h74.200v{pg.art.h}H1.700z" />
              {#if pg.id === 3}<path d="M29 {pg.art.y + 2.500}h18" stroke="#d03030" />{/if}
              {#each pg.art.bars as [x, w, c]}
                <rect x={x + 1.7} y={pg.art.y + pg.art.sy} width={w} height={pg.art.sh} fill={c} />
              {/each}
              {#if pg.id !== 3}<path d="M35 26h8" stroke="#ffc040" stroke-width="2" />{/if}
              <path d="M35 {pg.art.y + pg.art.sy + pg.art.sh - 3.5}h8.500" stroke="#201020" stroke-width="1.200" />
            </svg>
            <svg class="go" width="12" height="22"><path d="M1 1.500l9.500 9.500L1 20.500z" fill="none" stroke="#999" /></svg>
          </div>
        </section>
      {/each}
      <section class="card">
        <div class="card-top end">
          <svg width="50" height="12"><path d="M0 9.500h9" stroke="#000" stroke-width="2" /><path d="M21.500 6h5v4.500h-5zM24 5V2.500h5V8h-2.500" fill="none" stroke="#000" stroke-width="1.400" /><path d="M42.500 3l7 7M49.500 3l-7 7" stroke="#000" stroke-width="1.600" /></svg>
        </div>
        <div class="active-name">{@render t('small_square_debug', 96.400)}</div>
        <div class="card-body last">
          <div class="num">5</div>
          <div class="thumb sel"><i></i></div>
          <svg class="go" width="12" height="22"><path d="M1 1.500l9.500 9.500L1 20.500z" fill="none" stroke="#999" /></svg>
        </div>
      </section>
    </aside>

    <div class="work">
      <svg class="canvas" width="1606" height="941" viewBox="138.600 89 1605.900 941.300" preserveAspectRatio="none">
        <rect x="138" y="89" width="1607" height="942" fill="#000" />
        <g fill="none" stroke-width="1">
          <path d={redV + redH} stroke="#86121a" />
          <path d={greenV + greenH} stroke="#1e8426" />
        </g>
        <path d="M871.500 461.800h143.300v167.400H871.500z" fill="#989898" />
        <path d="M883.100 461.800h120v12h-120z" fill="#ff0" />
        <path d="M883.100 473.500h120v12h-120z" fill="#b8ff90" />
        <path d="M883.100 485.400h120v143.800h-120z" fill="#ff8f8c" />
        <g fill="none" stroke-width="1">
          <path d={kGrayH} stroke="#844a4c" />
          <path d={kRedV + kRedH} stroke="#8a0a0c" />
          <path d="M919.100 461.400v168M979.100 461.400v168M871.100 545.400h144M871.100 605.400h144" stroke="#3c7a24" />
          <path d="M871.100 485.400h144" stroke="#108010" />
        </g>
        <path d="M138 89.500H1745" stroke="#6a1024" />
        <path d="M187.100 89V1031M138 703.600H1745" stroke="#e8e8e0" stroke-width="1" />
      </svg>
      <div class="vscroll">
        <svg width="16" height="941" viewBox="0 0 16 941"><path d="M5 11l3.500-4L12 11zM5 930h7l-3.500 3.500z" fill="#333" /><rect x="1.500" y="719" width="13" height="32" rx="1" fill="url(#soft-knob)" stroke="#8a8a8a" /><path d="M4.500 732.500h7M4.500 735.500h7M4.500 738.500h7" stroke="#555" /></svg>
      </div>
      <div class="hscroll">
        <svg width="1606" height="16" viewBox="0 0 1606 16"><path d="M9.500 5v7L6 8.500zM1596 5v7l3.500-3.500z" fill="#333" /><rect x="639" y="1.500" width="201" height="14" fill="url(#bar)" stroke="#9a9a9a" /><path d="M736 5v6.500M739 5v6.500M742 5v6.500" stroke="#555" /><defs><linearGradient id="bar" x2="0" y2="1"><stop stop-color="#f2f2f2" /><stop offset=".45" stop-color="#e4e4e6" /><stop offset=".5" stop-color="#cfd0d4" /><stop offset="1" stop-color="#c4c5ca" /></linearGradient></defs></svg>
      </div>
      <div class="corner"></div>
    </div>

    <aside class="toolbox">
      <div class="blank"></div>
      <div class="grip"></div>
      <div class="tool-grid top">
        {#each topTools as d}<svg width="73" height="46" viewBox="0 0 73 46">{@html d}</svg>{/each}
      </div>
      <div class="grip second"></div>
      <div class="tool-grid knit">
        {#each knitTools as d}<svg width="73" height="46" viewBox="0 0 73 46">{@html d}</svg>{/each}
      </div>
      <div class="grip third"></div>
      <div class="view-row">
        <svg width="64" height="48" viewBox="0 0 64 48">
          <circle cx="17.500" cy="21" r="14" fill="#cdcdcd" stroke="#888" stroke-width="1" /><circle cx="17.500" cy="21" r="11" fill="url(#lens)" stroke="#f0f0f0" stroke-width="1" />
          <path filter="url(#sh)" d="M24 22c4-1 7 3 9 4l-5-19c1-2 3-1 4 1l4 12 0-15c1-2 3-2 4 0l1 15 3-14c2-1 3 0 3 2l-1 15 5-9c2-1 3 1 2 3-2 7-5 14-8 21-1 4-14 4-16 1-2-7-4-11-9-14z" fill="#eee" />
        </svg>
        <div class="grid-btn">
          <svg width="64" height="39" viewBox="0 0 64 39">
            <rect width="64" height="39" fill="#e85c20" /><rect x="2" y="3" width="59" height="33" fill="#7d8480" />
            <path d="M3 7h57M3 17h57M3 27h57M3 12h57M3 22h57" stroke="#58d848" stroke-width="1.300" />
            <path d="M3 13h57M3 24h57M3 33h57M11 3v33M31 3v33M51 3v33" stroke="#c8282c" stroke-width="1.800" />
            <path d="M7 3v33M17 3v33M22 3v33M27 3v33M36 3v33M41 3v33M46 3v33M57 3v33" stroke="#78e050" stroke-width="1.500" />
          </svg>
        </div>
      </div>
      <div class="zoom-row">
        <svg width="49" height="50" viewBox="0 0 49 50"><path d="M25 12q9 8 3 18l16 14" stroke="#666" stroke-width="5" fill="none" opacity=".7" filter="url(#soft)" /><circle cx="18" cy="21" r="10.700" fill="url(#paper)" stroke="#111" stroke-width="1.800" /><path d="M12 21.500h13" stroke="#000" stroke-width="2.500" /><path d="M27 29l9.500 11" stroke="#222" stroke-width="3.500" /><path d="M27 28.500l9.500 11" stroke="#aaa" stroke-width="1.200" /></svg>
        <svg width="24" height="50" viewBox="0 0 24 50"><path filter="url(#sh)" d="M11 4.500L20.500 17h-4.500v5H6v-5H1.500z" fill="#eee" /><path filter="url(#sh)" d="M11 46L20.500 33h-4.500v-5H6v5H1.500z" fill="#eee" /></svg>
        <svg width="58" height="50" viewBox="0 0 58 50"><path d="M33 12q9 8 3 18l16 14" stroke="#666" stroke-width="5" fill="none" opacity=".7" filter="url(#soft)" /><circle cx="25" cy="21" r="10.700" fill="url(#paper)" stroke="#111" stroke-width="1.800" /><path d="M18.500 21.500h13M25 14.500v14" stroke="#222" stroke-width="3" /><path d="M34 29l9.500 11" stroke="#222" stroke-width="3.500" /><path d="M34 28.500l9.500 11" stroke="#aaa" stroke-width="1.200" /></svg>
      </div>
      <div class="slider-row">
        <svg width="86" height="22" viewBox="0 0 86 22"><rect x="0" y="3" width="85.500" height="17.500" fill="#f4f4f4" /><rect x="50" y="4.500" width="34.500" height="14.500" fill="#e4e6e8" /><rect x="5.400" y="4.800" width="37" height="12.700" fill="#3399ff" /><rect x="41.500" y="0.500" width="8" height="21" rx="1" fill="#f2ede8" stroke="#7a8696" /></svg>
        {@render t('x 32.0', 28.5)}
        <svg width="7" height="4"><path d="M0 0h7L3.500 4z" /></svg>
      </div>
      <div class="pad">
        {#each pad as [d, r, c]}
          {#if d}
            <svg width="51" height="40" viewBox="0 0 51 40">
              <g filter="url(#sh)"><path transform={c ? `translate(25 20) rotate(${r}) translate(-20 -17)` : `translate(25 20) scale(${r === 90 || r === 180 ? -1 : 1} ${r === -90 || r === 180 ? -1 : 1}) translate(-15 -15)`} {d} fill={r ? '#d9d9d9' : 'url(#soft-knob)'} stroke="#f0f0f0" stroke-width=".8" /></g>
            </svg>
          {:else}
            <svg width="51" height="40" viewBox="0 0 51 40"><path d="M8 19.500h13M30 19.500h13M25 8.500V16M25 23v8.500" stroke="#000" stroke-width="1.300" /><circle cx="25" cy="19.500" r="4" fill="url(#ball)" filter="url(#sh)" /><text x="7" y="32.200" font-size="10.500" font-weight="bold" textLength="14.500" lengthAdjust="spacingAndGlyphs">0,0</text></svg>
          {/if}
        {/each}
      </div>
    </aside>
  </main>

  <div class="palette">
    <svg class="pal-nav" width="78" height="56" viewBox="0 0 78 56">
      <g fill="none" stroke="#808080"><path d="M13 6v10.500" stroke-width="2" /><path d="M26 6v10.500L18 11.200zM8 26v10.500l8-5.200zM18 26v10.500l8-5.200z" /><path d="M29 26v10.500" stroke-width="2" /></g>
      <path d="M47 6v31L33 21.500z" fill="url(#knob)" stroke="#808080" /><path d="M53 6v31l14-15.500z" fill="#cfcfcf" stroke="#777" /><path d="M54.500 37.500l14-16L54 5.500" stroke="#555" fill="none" stroke-width="1.300" /><path d="M48 5v32.500" stroke="#444" stroke-width="1.600" />
    </svg>
    <div class="swatches">
      {#each swatches as [c, d], i}
        <div class="sw">
          <svg width="32" height="32" viewBox="0 0 32 32"><rect x=".5" y=".5" width="31" height="31" fill={c} stroke="#000" />{@html d}</svg>
          <span>{i}</span>
        </div>
      {/each}
    </div>
    <svg class="pal-next" width="45" height="57" viewBox="0 0 45 57"><path d="M19 5.500v31L5 21z" fill="url(#knob)" stroke="#777" /><path d="M24.500 5.500v31L38.500 21z" fill="#cfcfcf" stroke="#777" /><path d="M26 37l13.500-16L25.500 5" stroke="#555" fill="none" stroke-width="1.300" /><path d="M20 4v33" stroke="#333" stroke-width="1.600" /><path d="M4 45h7v3H4z" /><path d="M14 46.500h12M16 44.500v4M24 44.500v4" stroke="#000" stroke-width="1.500" /><path d="M30 45.200h8M30 48h8" stroke="#000" stroke-width="1.100" stroke-dasharray="3.500 1" /><path d="M44 1v56" stroke="#888" stroke-width="1" /></svg>
    <div class="current">
      <span>1</span><i></i>
      <svg width="12" height="24"><path d="M0 7.500L6 1l6 6.500zM0 16.500h12L6 23z" /></svg>
    </div>
    <div class="pen-width">
      <span class="pw-l">1</span>
      <svg width="104" height="25" viewBox="0 0 104 25"><path filter="url(#sh)" d="M6 13L99 4v16z" fill="url(#knob)" /></svg>
      <div class="spin"><span>1</span><svg width="15" height="18"><rect x=".5" y=".5" width="13" height="7" fill="#e8ecf4" stroke="#b0b8c8" /><rect x=".5" y="9.500" width="13" height="7" fill="#e8ecf4" stroke="#b0b8c8" /><path d="M4.500 5.500l2.500-3 2.500 3zM4.500 11.500h5l-2.500 3z" fill="#4a5a7a" /></svg></div>
    </div>
  </div>

  <div class="panelbar">
    {#each panels as q}
      <div class="panel" style:width="{q.span}px">
        {#if q.drop}<svg class="pdrop" width="8" height="5"><path d="M0 0h8L4 5z" /></svg>{/if}
        <svg class:flip={!q.up} width="12" height="12"><path d="M1 11L6 1l5 10H8.500L6 6 3.500 11z" fill="#fff" stroke="#333" stroke-width="1" /></svg>
        {@render t(q.n, q.w)}
      </div>
    {/each}
    <div class="macro">
      <svg width="16" height="20" viewBox="0 0 16 20"><path d="M.5 .5h15v19H.5z" fill="#fff" stroke="#777" /><path d="M.5 2.500h15" stroke="#aaa" stroke-width="3" /><path d="M1 6.500h14M1 10.500h14M1 14.500h14" stroke="#999" /></svg>
      {@render t('Macro', 30)}
      <svg class="mdrop" width="8" height="5"><path d="M0 0h8L4 5z" /></svg>
    </div>
    {#each utils as q}
      <div class="util" style:width="{q.slot}px">
        <svg width="20" height="20" viewBox="0 0 20 20">{@html q.i}</svg>
        {@render t(q.n, q.w)}
      </div>
    {/each}
  </div>

  <div class="status">
    {#each status as [txt, w, slot, x]}
      <div class="cell" style:width="{slot}px" style:padding-left="{x}px">{#if txt}{@render t(txt, w)}{/if}</div>
    {/each}
  </div>

  <footer class="taskbar">
    <svg class="orb" width="38" height="38" viewBox="0 0 38 38"><circle cx="19" cy="19" r="17.500" fill="url(#orb)" stroke="#16406c" /><path d="M11 11q4-3 8 0l-1.500 7q-4-2-8 0z" fill="#f0582c" /><path d="M20 11.500q4 3 8 0L26.500 19q-4 2-8 0z" fill="#8cc840" /><path d="M9 20q4-3 8 0l-1.500 7q-4-3-8 0z" fill="#3aa0e8" /><path d="M18 20.500q4 3 8 0L24.500 28q-4 3-8 0z" fill="#fcc820" /></svg>
    <svg class="ie" width="32" height="32" viewBox="0 0 32 32"><path d="M26 21c-2 5-6 7-10 7-6 0-10-5-10-11S11 7 17 7s10 5 9.500 11.500H11.500c0 3 2 5 4.500 5 2 0 3.500-1 4-2.500zM11.500 15H21c0-2.500-2-4-4.500-4s-4.500 1.500-5 4z" fill="#6cd0f8" stroke="#2a90d0" stroke-width=".7" /><path d="M5 29C-1 25 8 10 18 4c8-4 12-2 10 4-1-4-5-4-10 0C9 13 3 22 5 29z" fill="#f4c820" /></svg>
    <div class="task stack"><svg width="34" height="32" viewBox="0 0 34 32"><path d="M2 5l2-2h9l2 2h17v22H2z" fill="#f0d478" /><path d="M5 2h5v4H5z" fill="#3a9a40" /><path d="M14 4h6v3h-6z" fill="#d84830" /><path d="M22 6h6v3h-6z" fill="#40a0d8" /><path d="M2 9h30v18H2z" fill="#f8e498" stroke="#d0a840" stroke-width=".7" /><path d="M7 30V19q0-2 2-2h16q2 0 2 2v11h-5v-6H12v6z" fill="#a4dcf4" stroke="#58a8d0" stroke-width=".8" /></svg></div>
    <svg class="wmp" width="28" height="28" viewBox="0 0 28 28"><path d="M5 4h20v20H5z" fill="#60b4e8" opacity=".8" /><path d="M2 3h20v22H2z" fill="#7cc0e8" /><circle cx="12.500" cy="14" r="9.500" fill="#f08028" /><path d="M9 8.500l9 5.500-9 5.500z" fill="#fff" /></svg>
    <div class="task"><svg width="32" height="34" viewBox="0 0 32 34"><path d="M16 2.500l14 14-14 14L2 16.500z" fill="#e8b858" stroke="#666" /><path d="M9 6h14v20l-3 4h-8l-3-4z" fill="#666" stroke="#444" /><path d="M11 5v22M14 4v24M17 4v24M20 5v22" stroke="#d4d0cc" stroke-width="1.200" /><path d="M10 4h12v3H10z" fill="#d8ccd0" /><path d="M10 29h12v2H10z" fill="#aaa" /></svg></div>
    <div class="task"><svg width="34" height="34" viewBox="0 0 24 24">{@html diamondIcon}</svg></div>
    <div class="tray">
      {#each tray as d}<svg width="15" height="15" viewBox="0 0 15 15">{@html d}</svg>{/each}
    </div>
    <div class="clock">
      {@render t('12:05 PM', 48, 'seg w')}
      {@render t('1/16/2019', 52.3, 'seg w')}
    </div>
    <div class="peek"></div>
  </footer>

  <svg class="notes" width="1920" height="1202" viewBox="0 0 1920 1202">
    <circle cx="208.900" cy="88" r="10" />
    <path d="M208.900 88V307.200" />
    <text x="224.600" y="305.100">Create Page</text>
    {#each notes as [label, ty, ly], i}
      <text class="end" x="1531.200" y={ty}>{label}</text>
      <path d="M1544.600 {ly}H1764" />
      {#if i < 3}<circle cx="1764.200" cy={ly} r="10" />{/if}
    {/each}
    <path d="M1766.400 802.300H1827.600V851H1916.200V925.500H1766.400z" />
  </svg>
</div>

<style>
  :global(body) { overflow: hidden; background: #c0c0c0; }
  .defs { position: absolute; }
  .screen {
    zoom: 2.13334;
    position: relative;
    width: 1920px;
    height: 1202px;
    overflow: hidden;
    display: grid;
    grid-template-rows: 24px 22px 43px 957.500px 58px 34px 24.200px 39.300px;
    background: #c0c0c0;
    font-family: 'Liberation Sans', Arial, sans-serif;
    font-size: 12px;
    color: #000;
  }
  svg { display: block; flex: none; }
  .t { overflow: visible; }
  .t text { font-size: 12px; }
  .seg text { font-family: 'Open Sans', 'Noto Sans', sans-serif; }
  .w text { fill: #fff; }

  .title {
    display: flex;
    align-items: center;
    border-top: 2px solid #fff;
    border-bottom: 1px solid #4f5f70;
    box-shadow: inset 0 -1px #c8d8ea;
    background: linear-gradient(90deg, #b5cae6 0, #bccfe8 300px, #9db8dc 380px, #8faed6 480px, #a0bade 590px, #90aed6 720px, #9cb8dc 900px, #8eacd6 1150px, #a4bce0 1350px, #94b0d8 1600px, #a8bede 1810px, #b2c8e6 1920px);
  }
  .title .app-icon { margin-right: 4.700px; }
  .win-btns {
    display: flex;
    align-self: flex-start;
    margin-left: auto;
    margin-right: 3px;
    height: 17.500px;
    border: 1px solid #6f86a8;
    border-top: 0;
    border-radius: 0 0 4px 4px;
    background: linear-gradient(#b4c6e2, #a9bedd);
  }
  .win-btns svg + svg { border-left: 1px solid #6f86a8; box-sizing: border-box; height: 17.500px; }

  .menu {
    display: flex;
    align-items: center;
    padding-left: 6.400px;
    padding-bottom: 1px;
    box-sizing: border-box;
    border-bottom: 1px solid #7c8086;
    box-shadow: inset 0 -1px #eef0f6, inset 0 -2px #b9bcc8;
    background: linear-gradient(#fff, #eef0f8 35%, #d6dcf0 45%, #dfe2f0);
  }
  .menu .app-icon { margin-right: 7.500px; }
  .item text { fill: #686e80; }
  .key { text-decoration: underline; }
  .gap { flex: none; }
  .child-btns { margin-left: auto; margin-right: 1px; display: flex; gap: 1.200px; }
  .child-btns svg { box-sizing: border-box; border: 1px solid #98a2ae; background: #e2ecf6; outline: .5px solid #fff; }

  .toolbar { padding-left: 84px; border-bottom: 1px solid #e0d0d4; box-sizing: border-box; }
  .tools {
    width: 1337px;
    height: 42px;
    box-sizing: border-box;
    display: flex;
    padding-left: 10.500px;
    border-top: 1px solid #e0e0e0;
    border-bottom: 1px solid #808080;
    border-right: 1px solid #808080;
    background: linear-gradient(90deg, transparent 5.500px, #808080 5.500px 6.300px, #e4e4e4 6.300px 7.300px, transparent 7.300px 8.500px, #808080 8.500px 9.300px, transparent 9.300px);
  }
  .tool { width: 76px; flex: none; display: flex; flex-direction: column; align-items: center; padding-top: .5px; gap: 2.100px; }
  .tool.off text { fill: #8a8a8a; }
  .drop { width: 12px; flex: none; display: flex; justify-content: center; padding-top: 18px; }
  .drop path { fill: #222; }
  .drop.dim path { fill: #777; }
  .sep { width: 6.300px; flex: none; margin: 1px 0; background: linear-gradient(90deg, transparent 1.400px, #777 1.400px 2.400px, #ddd 2.400px 3.200px, transparent 3.200px); }

  .body { display: grid; grid-template-columns: 138.600px 1622px 1fr; min-height: 0; }
  .pages { border-top: 1px solid #e0e0e0; box-sizing: border-box; border-bottom: 1px solid #808080; height: 955.700px; width: 135.700px; }
  .pages-head { height: 12.800px; display: flex; align-items: center; justify-content: space-between; background: linear-gradient(90deg, #8c8c8c, #7e7e7e); padding-right: 3px; }
  .close { background: #c0c0c0; border: .5px solid #e0e0e0; box-sizing: border-box; }
  .pages-nav { height: 25.700px; box-sizing: border-box; display: flex; padding: 6px 0 0 63.500px; gap: 2.800px; }
  .nb { border: 1px solid #808080; border-radius: 2px; background: linear-gradient(#fff, #d4d4d4); box-sizing: border-box; }
  .nb.lite { border-color: #f0f0f0; margin-right: 3.500px; background: #eee; }
  .card { height: 106.800px; box-sizing: border-box; border-top: 1px solid #e8e8e8; border-left: 1px solid #e4e4e4; border-right: 1px solid #777; border-bottom: 1px solid #777; }
  .card-top { display: flex; align-items: center; height: 23px; padding: 0 7.500px 0 6px; justify-content: space-between; }
  .card-top.end { justify-content: flex-end; }
  .card-name { height: 18px; margin-left: -1px; padding-top: 1.500px; box-sizing: border-box; }
  .card-body { display: flex; padding-left: 2.500px; }
  .num { width: 26px; height: 21.500px; margin: 5.200px 4.200px 0 0; box-sizing: border-box; border: 1px solid #808080; box-shadow: inset 1px 1px #dadada; text-align: center; line-height: 21px; font-size: 11.500px; flex: none; }
  .thumb { border: 1px solid #808080; border-right-color: #e8e8e8; border-bottom-color: #e8e8e8; box-sizing: border-box; }
  .sel { width: 80px; height: 62px; border: 2px solid #f00; display: flex; }
  .sel i { width: 29px; margin-left: 23px; background: #000; }
  .go { margin: 20.500px 0 0 5px; }
  .active-name { width: 128px; height: 17px; margin: .8px 0 0 2.500px; box-sizing: border-box; border: 1px solid #888; border-radius: 2px; background: linear-gradient(#fff, #e2e2e2); display: flex; align-items: center; justify-content: center; }
  .card-body.last { padding-top: 2px; }

  .work { display: grid; grid-template-columns: 1605.800px 16.200px; grid-template-rows: 941.300px 16.200px; }
  .canvas { width: 1605.800px; height: 941.300px; }
  .vscroll { background: linear-gradient(90deg, #e6e6e6, #f4f4f4 60%, #eee); }
  .hscroll { background: linear-gradient(#fff, #e6e6e6 20%, #f0f0f0 80%, #eee); }
  .corner { background: #b8b8b8; }

  .toolbox { border-left: 1px solid #777; border-right: 1px solid #888; border-bottom: 1px solid #888; box-sizing: border-box; box-shadow: inset 1px 0 #dedede; }
  .blank { height: 174.500px; border-top: 1px solid #dedede; border-bottom: 1px solid #808080; box-sizing: border-box; }
  .grip { height: 6px; margin: 0 1px; background: linear-gradient(transparent 2px, #e2e2e2 2px 3px, #808080 3px 3.700px, transparent 3.700px 4.600px, #e2e2e2 4.600px 5.300px, #808080 5.300px); }
  .tool-grid { display: grid; grid-template-columns: 73px 73px; grid-auto-rows: 46px; margin-left: 6px; }
  .tool-grid svg { overflow: visible; }
  .top { height: 325px; }
  .knit { height: 187px; padding-top: 2.500px; box-sizing: border-box; }
  .second { border-top: 1px solid #808080; height: 10px; box-sizing: border-box; padding-top: 3px; background-position: 0 3px; background-repeat: no-repeat; }
  .third { border-top: 1px solid #808080; height: 9.500px; box-sizing: border-box; background-position: 0 3px; background-repeat: no-repeat; }
  .view-row { display: flex; height: 51px; padding-left: 7px; }
  .view-row > svg { margin-top: .5px; }
  .grid-btn { margin: 3.500px 0 0 4px; width: 72px; height: 43.500px; box-sizing: border-box; border: 1px solid #666; border-radius: 3px; background: #a8a8a8; display: flex; justify-content: center; align-items: center; }
  .zoom-row { display: flex; height: 49.500px; padding-left: 7.500px; justify-content: flex-start; }
  .zoom-row svg:nth-child(2) { margin-left: 11.500px; overflow: visible; }
  .zoom-row svg:nth-child(3) { margin-left: .5px; }
  .slider-row { display: flex; height: 27px; padding-left: 11.800px; align-items: flex-start; }
  .slider-row .t { margin: 6px 6px 0 13.500px; }
  .slider-row svg:last-child { margin-top: 11px; }
  .pad { display: grid; grid-template-columns: repeat(3, 51px); grid-auto-rows: 40.500px; padding-left: 3.500px; margin-top: -2px; }
  .pad svg { overflow: visible; }

  .palette { display: flex; border-bottom: 1px solid #777; box-sizing: border-box; }
  .pal-nav { width: 78.400px; }
  .swatches { display: flex; gap: 4px; padding-top: 1.600px; }
  .sw { width: 32px; text-align: center; font-size: 12px; line-height: 14px; letter-spacing: -.4px; }
  .sw svg { margin-bottom: 2.400px; }
  .pal-next { margin-left: 10px; }
  .current { width: 88px; height: 35px; margin: 8.500px 0 0 4.500px; box-sizing: border-box; border: 1px solid #777; box-shadow: inset 1px 1px #e8e8e8, 1px 1px #e8e8e8; display: flex; align-items: center; padding-left: 12.500px; }
  .current i { width: 25px; height: 25px; margin: 0 9px 0 15.500px; background: #f00; border: 1px solid #000; box-sizing: border-box; }
  .pen-width { display: flex; align-items: center; height: 25px; margin: 15.500px 0 0 6px; }
  .pw-l { width: 16.500px; height: 23px; background: #808080; color: #fff; text-align: center; line-height: 24px; }
  .pen-width > svg { border: 1px solid #ddd; border-right-color: #888; border-bottom-color: #888; box-sizing: border-box; }
  .spin { width: 49px; height: 21px; background: #fff; display: flex; align-items: center; justify-content: space-between; padding: 0 2px; box-sizing: border-box; }

  .panelbar { display: flex; align-items: center; padding-left: 6.500px; border-bottom: 1px solid #858585; box-sizing: border-box; }
  .panel { flex: none; display: flex; align-items: center; gap: 8.300px; position: relative; }
  .pdrop { position: absolute; left: -19px; top: 5px; }
  .flip { transform: scaleY(-1); }
  .macro { width: 111.700px; height: 33px; flex: none; display: flex; align-items: center; gap: 6.500px; border-right: 1px solid #777; box-sizing: border-box; }
  .mdrop { margin-left: 39px; }
  .util { flex: none; display: flex; align-items: center; gap: 3.500px; padding-left: 9.500px; box-sizing: border-box; }

  .status { display: flex; background: #f0edec; border-top: 1px solid #fff; border-bottom: 1px solid #fff; box-sizing: border-box; }
  .cell { flex: none; box-sizing: border-box; border-right: 1px solid #d6d4d4; display: flex; align-items: center; }
  .cell:last-child { border: 0; }

  .taskbar {
    display: flex;
    align-items: center;
    border-top: 1px solid #16365c;
    box-shadow: inset 0 1px #86acd4;
    box-sizing: border-box;
    background: linear-gradient(97deg, #28589c 0, #2c60ac 90px, #3470c4 200px, #3672c8 640px, #417dce 760px, #3874c6 940px, #3570c2 1000px, #437ece 1080px, #3672c4 1180px, #3f7ccc 1280px, #3470c4 1400px, #3470c2 1590px, #2e60a8 1640px, #2c5a9a 1920px);
  }
  .orb { margin-left: 7.500px; }
  .ie { margin-left: 26.500px; }
  .task { width: 58px; height: 37px; box-sizing: border-box; margin-top: 1px; border: 1px solid #9cbce8; border-radius: 3px; background: linear-gradient(150deg, rgba(255,255,255,.6), rgba(255,255,255,.15) 60%, rgba(255,255,255,.3)); display: flex; align-items: center; justify-content: center; outline: .6px solid #1c4480; }
  .stack { width: 54px; margin-left: 16.500px; box-shadow: 2px 0 #2c5ca4, 3px 0 #9cbce8; }
  .wmp { margin: 0 21.500px 0 22.500px; }
  .task + .task { margin-left: 3px; }
  .tray { display: flex; gap: 9.050px; margin-left: auto; margin-right: 16px; }
  .clock { display: flex; flex-direction: column; align-items: center; gap: 3.200px; width: 52.500px; margin-right: 10.500px; }
  .peek { width: 14px; height: 38px; border-left: 1px solid #7c9cc8; background: linear-gradient(160deg, #8aa8d4, #284f8c 50%, #3c68a8); box-sizing: border-box; }

  .notes { position: absolute; left: 0; top: 0; }
  .notes circle { fill: #ffaa2e; }
  .notes path { fill: none; stroke: #ffaa2e; stroke-width: 5.300px; }
  .notes text { fill: #ffaa2e; font-family: Roboto, sans-serif; font-size: 40px; }
  .notes .end { text-anchor: end; }
</style>
